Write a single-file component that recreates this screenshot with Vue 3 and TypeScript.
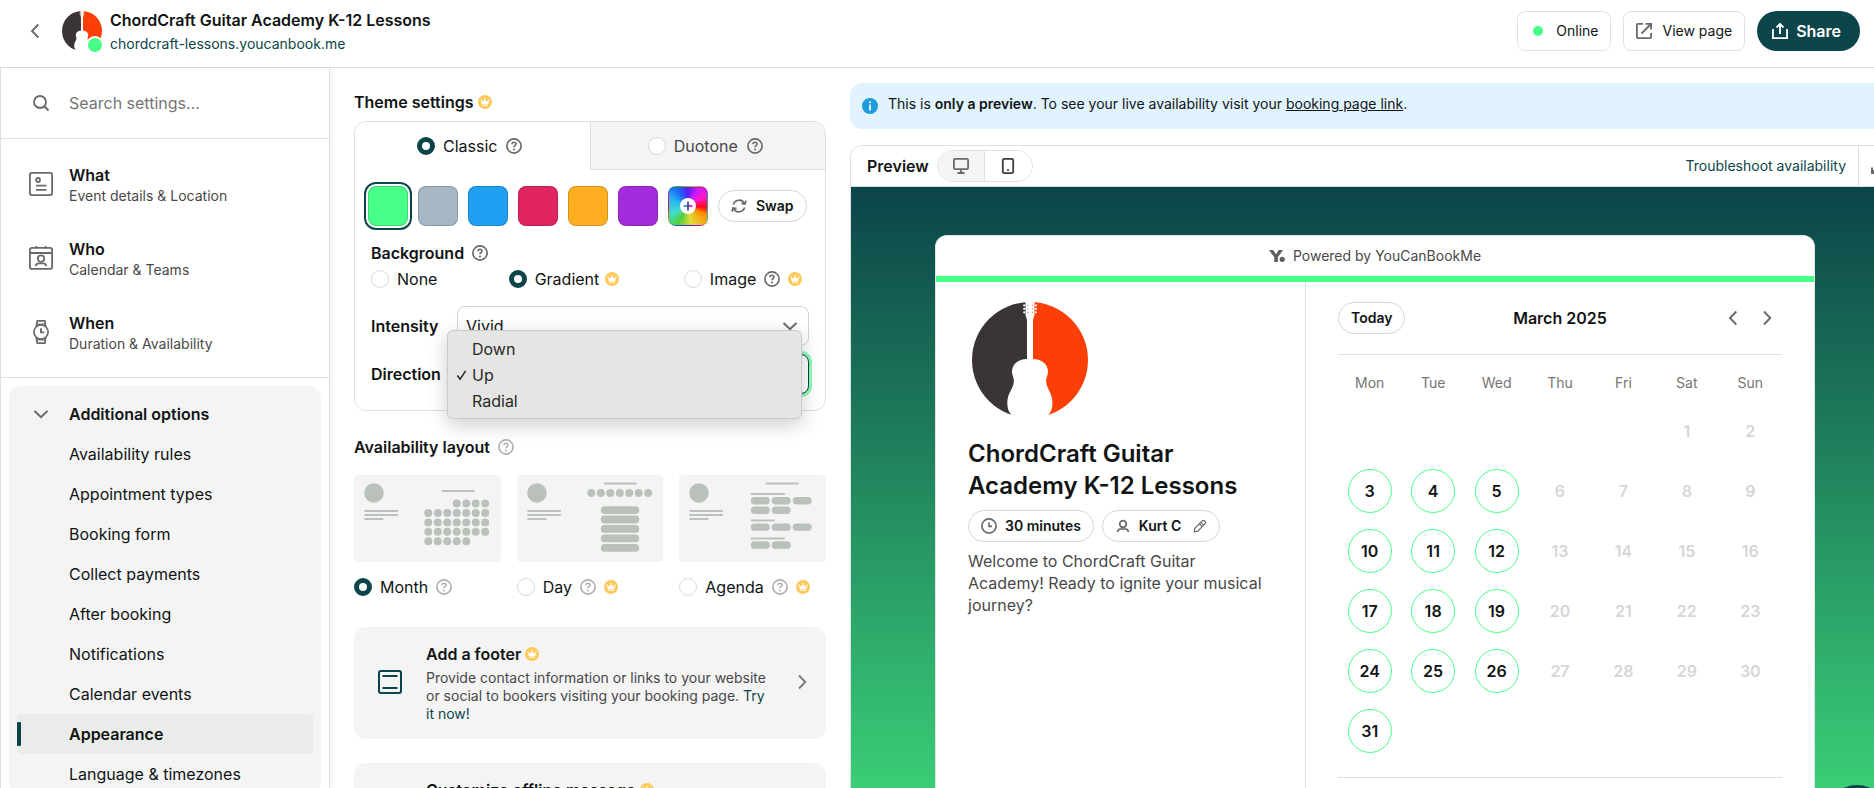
<script setup lang="ts">
import { ref } from 'vue'

interface Section { icon: string; title: string; detail: string }
interface Layout { id: string; label: string; premium: boolean }
interface Day { label: number | null; open: boolean }

const sections: Section[] = [
  { icon: 'what', title: 'What', detail: 'Event details & Location' },
  { icon: 'who', title: 'Who', detail: 'Calendar & Teams' },
  { icon: 'when', title: 'When', detail: 'Duration & Availability' },
]

const options: string[] = [
  'Availability rules', 'Appointment types', 'Booking form', 'Collect payments', 'After booking',
  'Notifications', 'Calendar events', 'Appearance', 'Language & timezones',
]

const swatches: string[] = ['green', 'grey', 'blue', 'red', 'orange', 'purple']

const layouts: Layout[] = [
  { id: 'month', label: 'Month', premium: false },
  { id: 'day', label: 'Day', premium: true },
  { id: 'agenda', label: 'Agenda', premium: true },
]

const directions: string[] = ['Down', 'Up', 'Radial']
const weekdays: string[] = ['Mon', 'Tue', 'Wed', 'Thu', 'Fri', 'Sat', 'Sun']

const theme = ref('classic')
const colour = ref('green')
const background = ref('gradient')
const intensity = ref('Vivid')
const direction = ref('Up')
const layout = ref('month')
const menuOpen = ref(true)
const search = ref('')

// 1 March 2025 is a Saturday, so five cells stay blank before it.
const leading = 5
const weeks: Day[][] = Array.from({ length: 6 }, (_, w) =>
  Array.from({ length: 7 }, (_, d) => {
    const n = w * 7 + d - leading + 1
    const inMonth = n >= 1 && n <= 31
    return { label: inMonth ? n : null, open: inMonth && d < 3 }
  }),
)

const dotX = (i: number): number => 74.5 + i * 9.5
const monthDots = [
  ...[3, 4, 5, 6].map((i) => ({ x: dotX(i), y: 28.5 })),
  ...[38, 47.5, 57].flatMap((y) => [0, 1, 2, 3, 4, 5, 6].map((i) => ({ x: dotX(i), y }))),
  ...[0, 1, 2, 3, 4].map((i) => ({ x: dotX(i), y: 66.5 })),
]
const agendaPills = [
  [72, 22], [93, 22], [114, 22], [72, 31.5], [93, 31.5],
  [72, 48.5], [93, 48.5], [114, 48.5], [72, 66.5], [93, 66.5],
]

function pick(value: string): void {
  direction.value = value
  menuOpen.value = false
}
</script>

<template>
  <div class="app">
    <svg class="defs" aria-hidden="true">
      <symbol id="i-help" viewBox="0 0 16 16">
        <circle cx="8" cy="8" r="7.1" fill="none" stroke="currentColor" stroke-width="1.7" />
        <path d="M6 6.3C6 5 6.9 4.3 8 4.3s2 .7 2 1.8c0 1.4-2 1.5-2 3.1" fill="none" stroke="currentColor" stroke-width="1.6" />
        <circle cx="8" cy="11.4" r="1" fill="currentColor" />
      </symbol>
      <symbol id="i-crown" viewBox="0 0 14 14">
        <circle cx="7" cy="7" r="7" fill="#ffc857" />
        <path d="M3.7 9 3 5.1l2.1 1.3L7 3.9l1.9 2.5L11 5.1 10.3 9zM4 9.6h6v1.1H4z" fill="#fff" />
        <circle cx="7" cy="3.7" r=".8" fill="#fff" />
        <circle cx="3" cy="5" r=".7" fill="#fff" />
        <circle cx="11" cy="5" r=".7" fill="#fff" />
      </symbol>
      <symbol id="i-left" viewBox="0 0 16 16"><path d="M11.3 1.5 5 8l6.3 6.5" fill="none" stroke="currentColor" stroke-width="1.9" /></symbol>
      <symbol id="i-right" viewBox="0 0 16 16"><path d="M5 1.5 11.3 8 5 14.5" fill="none" stroke="currentColor" stroke-width="1.9" /></symbol>
      <symbol id="i-down" viewBox="0 0 16 16"><path d="M1.5 5 8 11.3 14.5 5" fill="none" stroke="currentColor" stroke-width="1.9" /></symbol>
      <symbol id="i-search" viewBox="0 0 16 16">
        <circle cx="7" cy="7" r="6" fill="none" stroke="currentColor" stroke-width="1.8" />
        <path d="m11.2 11.2 4.3 4.3" stroke="currentColor" stroke-width="2" />
      </symbol>
      <symbol id="i-what" viewBox="0 0 24 24">
        <g fill="none" stroke="currentColor" stroke-width="1.8">
          <rect x=".9" y=".9" width="22.2" height="22.2" rx="2" />
          <circle cx="9" cy="8" r="2" />
          <path d="M7 13.6h10.500M7 17.900h10.500" />
        </g>
      </symbol>
      <symbol id="i-who" viewBox="0 0 24 24">
        <g fill="none" stroke="currentColor" stroke-width="1.8">
          <rect x=".9" y="1.900" width="22.2" height="21" rx="2" />
          <path d="M1 7h22M7.500 0v2M16.500 0v2" />
          <circle cx="12" cy="12.600" r="3.200" />
          <path d="M6.800 20.200c.2-2 1.200-2.900 2.900-2.900h4.600c1.700 0 2.700.9 2.900 2.900" />
        </g>
      </symbol>
      <symbol id="i-when" viewBox="0 0 24 24">
        <g fill="none" stroke="currentColor" stroke-width="1.7">
          <circle cx="12" cy="12" r="7.100" />
          <path d="m7.300 6.700.9-5.800h7.600l.9 5.800M7.300 17.300l.9 5.800h7.600l.9-5.800" />
          <path d="M8 4.200h8M8 19.800h8" stroke-width="1.200" />
          <path d="M12 8.200V12.400h3.200" stroke-width="1.900" />
        </g>
      </symbol>
      <symbol id="i-external" viewBox="0 0 16 16">
        <g fill="none" stroke="currentColor" stroke-width="1.800">
          <path d="M7 .9H1.900a1 1 0 0 0-1 1v12.200a1 1 0 0 0 1 1h12.200a1 1 0 0 0 1-1V10" />
          <path d="M9.500.9h5.600v5.600M15 1 5.500 10.500" />
        </g>
      </symbol>
      <symbol id="i-share" viewBox="0 0 16 16">
        <path d="M.9 6v9.100h14.200V6M8 11V1.500M4.500 4.500 8 1l3.500 3.500" fill="none" stroke="currentColor" stroke-width="1.900" />
      </symbol>
      <symbol id="i-swap" viewBox="0 0 16 16">
        <g fill="none" stroke="currentColor" stroke-width="1.700">
          <path d="M2.400 6.500a6 6 0 0 1 10.900-1.400M13.600 9.500A6 6 0 0 1 2.700 10.900" />
          <path d="M15 2.500l-1 3.500-3.600-.6M1 13.500l1-3.500 3.600.6" />
        </g>
      </symbol>
      <symbol id="i-footer" viewBox="0 0 24 24">
        <rect x="1" y="1" width="22" height="22" rx="2" fill="none" stroke="currentColor" stroke-width="2" />
        <path d="M4.500 6h15M4.500 18h15" stroke="currentColor" stroke-width="2" />
      </symbol>
      <symbol id="i-info" viewBox="0 0 16 16">
        <circle cx="8" cy="8" r="8" fill="#1e9cdb" />
        <path d="M8 6.500v6" stroke="#fff" stroke-width="1.700" />
        <circle cx="8" cy="4.200" r="1" fill="#fff" />
      </symbol>
      <symbol id="i-desktop" viewBox="0 0 16 16">
        <rect x=".9" y=".9" width="14.200" height="10.200" rx="1.200" fill="none" stroke="currentColor" stroke-width="1.800" />
        <path d="M8 11v4M4.500 15h7" stroke="currentColor" stroke-width="1.800" />
      </symbol>
      <symbol id="i-phone" viewBox="0 0 16 16">
        <rect x="2.800" y=".9" width="10.400" height="14.200" rx="1.500" fill="none" stroke="currentColor" stroke-width="1.800" />
        <circle cx="8" cy="12" r="1" fill="currentColor" />
      </symbol>
      <symbol id="i-expand" viewBox="0 0 16 16">
        <path d="M9.500 1H15v5.500M15 1 9.500 6.500M1 9.500V15h5.500M1 15l5.500-5.500" fill="none" stroke="currentColor" stroke-width="2" />
      </symbol>
      <symbol id="i-mark" viewBox="0 0 16 12">
        <path d="M0 0h4l3 4.200L9.800 0H14L8.900 7.300V12H5.300V7.300z" fill="currentColor" />
        <circle cx="13.200" cy="9.300" r="2.600" fill="currentColor" />
      </symbol>
      <symbol id="i-clock" viewBox="0 0 16 16">
        <circle cx="8" cy="8" r="7.100" fill="none" stroke="currentColor" stroke-width="1.700" />
        <path d="M8 4.500V8.300h3" fill="none" stroke="currentColor" stroke-width="1.700" />
      </symbol>
      <symbol id="i-person" viewBox="0 0 16 16">
        <circle cx="8" cy="6" r="3.300" fill="none" stroke="currentColor" stroke-width="1.700" />
        <path d="M2.700 14c.1-2.200 1-3 2.700-3h5.200c1.700 0 2.600.8 2.700 3" fill="none" stroke="currentColor" stroke-width="1.700" />
      </symbol>
      <symbol id="i-pencil" viewBox="0 0 14 14">
        <path d="M1.200 12.800 1.800 9.300 9.300 1.800a1.500 1.500 0 0 1 2.100 0l.8.8a1.500 1.500 0 0 1 0 2.100L4.700 12.200zM7.800 3.300l2.900 2.900M6.300 4.800l2.900 2.900" fill="none" stroke="currentColor" stroke-width="1.200" />
      </symbol>
      <symbol id="i-check" viewBox="0 0 12 12"><path d="m1.500 6.500 3 4L10.500 1.500" fill="none" stroke="currentColor" stroke-width="1.700" /></symbol>
      <symbol id="i-guitar" viewBox="0 0 124 124">
        <path d="M62 4A58 58 0 0 0 62 120z" fill="#3b3436" />
        <path d="M62 4A58 58 0 0 1 62 120z" fill="#fb3f06" />
        <path d="M59 61V22L57.500 17V3H66.500V17L65 22V61C74 61 80 66.500 80 74c0 3-2 5-1.800 10 .5 7 6.300 11 6.300 21 0 5-1.200 9-4.200 12v6H43.500v-6c-3-3-4.200-7-4.200-12 0-10 6-14 6.500-21 .2-5-1.800-7-1.800-10 0-7.500 6-13 15-13z" fill="#fff" />
        <g fill="#fff">
          <circle v-for="y in [7.300, 10.800, 14.300]" :key="y" cx="56.200" :cy="y" r="1.100" />
          <circle v-for="y in [7.300, 10.800, 14.300]" :key="y + 50" cx="67.900" :cy="y" r="1.100" />
        </g>
        <g fill="#fb8a68">
          <circle v-for="y in [7.300, 10.800, 14.300]" :key="y" cx="64.400" :cy="y" r=".7" />
        </g>
        <g fill="#8d8889">
          <circle v-for="y in [7.300, 10.800, 14.300]" :key="y" cx="60" :cy="y" r=".6" />
        </g>
      </symbol>
    </svg>

    <header class="topbar">
      <button class="plain back" type="button" aria-label="Back"><svg class="s16"><use href="#i-left" /></svg></button>
      <div class="avatar">
        <svg viewBox="4 4 116 116"><use href="#i-guitar" width="124" height="124" /></svg>
        <span class="presence"></span>
      </div>
      <div class="identity">
        <h1>ChordCraft Guitar Academy K-12 Lessons</h1>
        <a href="#">chordcraft-lessons.youcanbook.me</a>
      </div>
      <button class="boxed online" type="button"><span class="status"></span>Online</button>
      <button class="boxed" type="button"><svg class="s16 grey"><use href="#i-external" /></svg>View page</button>
      <button class="share" type="button"><svg class="s16"><use href="#i-share" /></svg>Share</button>
    </header>

    <div class="body">
      <nav class="sidebar" aria-label="Settings">
        <label class="search">
          <svg class="s16"><use href="#i-search" /></svg>
          <input v-model="search" type="text" placeholder="Search settings..." aria-label="Search settings" />
        </label>
        <div class="sections">
          <a v-for="s in sections" :key="s.title" class="section" href="#">
            <svg class="s24"><use :href="`#i-${s.icon}`" /></svg>
            <span><b>{{ s.title }}</b><small>{{ s.detail }}</small></span>
          </a>
        </div>
        <div class="extra">
          <button class="plain toggle" type="button"><svg class="s16"><use href="#i-down" /></svg>Additional options</button>
          <a v-for="o in options" :key="o" href="#" :class="['option', { active: o === 'Appearance' }]">{{ o }}</a>
        </div>
      </nav>

      <section class="settings">
        <h2>Theme settings <svg class="crown"><use href="#i-crown" /></svg></h2>
        <div class="panel">
          <div class="tabs">
            <div :class="['tab', { off: theme !== 'classic' }]">
              <label><input v-model="theme" type="radio" name="theme" value="classic" />Classic</label>
              <button class="plain help" type="button" aria-label="About Classic"><svg class="s16"><use href="#i-help" /></svg></button>
            </div>
            <div :class="['tab', { off: theme !== 'duotone' }]">
              <label><input v-model="theme" type="radio" name="theme" value="duotone" />Duotone</label>
              <button class="plain help" type="button" aria-label="About Duotone"><svg class="s16"><use href="#i-help" /></svg></button>
            </div>
          </div>

          <div class="swatches">
            <button v-for="c in swatches" :key="c" type="button" :aria-label="c" :class="['swatch', c, { chosen: colour === c }]" @click="colour = c"></button>
            <button type="button" class="swatch wheel" aria-label="Custom colour">
              <svg viewBox="0 0 16 16"><circle cx="8" cy="8" r="8" fill="#fff" /><path d="M3.500 8H8" stroke="#1294c4" stroke-width="1.600" /><path d="M8 8h4.500" stroke="#c400c8" stroke-width="1.600" /><path d="M8 3.500v9" stroke="#3a2f9a" stroke-width="1.600" /></svg>
            </button>
            <button type="button" class="pill swap"><svg class="s16 grey"><use href="#i-swap" /></svg>Swap</button>
          </div>

          <div class="fields">
            <h3>Background <button class="plain help" type="button" aria-label="About background"><svg class="s16"><use href="#i-help" /></svg></button></h3>
            <div class="choices">
              <span><label><input v-model="background" type="radio" name="bg" value="none" />None</label></span>
              <span><label><input v-model="background" type="radio" name="bg" value="gradient" />Gradient</label><svg class="crown"><use href="#i-crown" /></svg></span>
              <span>
                <label><input v-model="background" type="radio" name="bg" value="image" />Image</label>
                <button class="plain help" type="button" aria-label="About image"><svg class="s16"><use href="#i-help" /></svg></button>
                <svg class="crown"><use href="#i-crown" /></svg>
              </span>
            </div>
            <div class="field">
              <label for="intensity">Intensity</label>
              <div class="select">
                <select id="intensity" v-model="intensity"><option>Vivid</option><option>Subtle</option></select>
                <svg class="s16"><use href="#i-down" /></svg>
              </div>
            </div>
            <div class="field">
              <label for="direction">Direction</label>
              <div class="select focused">
                <select id="direction" v-model="direction"><option v-for="d in directions" :key="d">{{ d }}</option></select>
                <ul v-if="menuOpen" class="menu" role="listbox" aria-label="Direction">
                  <li v-for="d in directions" :key="d" role="option" :aria-selected="direction === d" @click="pick(d)">
                    <svg><use v-if="direction === d" href="#i-check" /></svg>{{ d }}
                  </li>
                </ul>
              </div>
            </div>
          </div>
        </div>

        <h2 class="spaced">Availability layout <button class="plain help faint" type="button" aria-label="About layouts"><svg class="s16"><use href="#i-help" /></svg></button></h2>
        <div class="layouts">
          <div v-for="l in layouts" :key="l.id" class="layout">
            <svg class="thumb" viewBox="0 0 147 87" aria-hidden="true">
              <g fill="#bac1ba">
                <circle cx="20" cy="18" r="9.800" />
                <path d="M10.500 35h33.500v2H10.500zM10.500 39h33.500v2H10.500zM10.500 43h19v2h-19z" />
                <template v-if="l.id === 'month'">
                  <path d="M88 15h33v2H88z" />
                  <circle v-for="(p, i) in monthDots" :key="i" :cx="p.x" :cy="p.y" r="4" />
                </template>
                <template v-else-if="l.id === 'day'">
                  <path d="M87 7.500h33v2H87z" />
                  <circle v-for="i in 7" :key="i" :cx="dotX(i - 1)" cy="18" r="4" />
                  <rect v-for="i in 5" :key="i + 10" x="84" :y="21.700 + i * 9.500" width="38.500" height="7.800" rx="3.900" />
                </template>
                <template v-else>
                  <path d="M87 7.500h33v2H87zM72 18h34v2H72zM72 44.500h24v2H72zM72 62.600h34v2H72z" />
                  <rect v-for="(p, i) in agendaPills" :key="i" :x="p[0]" :y="p[1]" width="19" height="7.500" rx="3.700" />
                </template>
              </g>
            </svg>
            <span>
              <label><input v-model="layout" type="radio" name="layout" :value="l.id" />{{ l.label }}</label>
              <button class="plain help faint" type="button" :aria-label="`About ${l.label}`"><svg class="s16"><use href="#i-help" /></svg></button>
              <svg v-if="l.premium" class="crown"><use href="#i-crown" /></svg>
            </span>
          </div>
        </div>

        <article class="promo">
          <svg class="s24"><use href="#i-footer" /></svg>
          <div>
            <h3>Add a footer <svg class="crown"><use href="#i-crown" /></svg></h3>
            <p>Provide contact information or links to your website or social to bookers visiting your booking page. <a href="#">Try it now!</a></p>
          </div>
          <svg class="s16"><use href="#i-right" /></svg>
        </article>
        <article class="promo">
          <svg class="s24"><use href="#i-footer" /></svg>
          <div>
            <h3>Customize offline message <svg class="crown"><use href="#i-crown" /></svg></h3>
            <p>Choose the message shown to bookers while your booking page is offline. <a href="#">Try it now!</a></p>
          </div>
          <svg class="s16"><use href="#i-right" /></svg>
        </article>
      </section>

      <section class="preview">
        <div class="notice">
          <svg class="s16"><use href="#i-info" /></svg>
          <p>This is <b>only a preview</b>. To see your live availability visit your <a href="#">booking page link</a>.</p>
        </div>
        <div class="frame">
          <div class="framebar">
            <h2>Preview</h2>
            <div class="devices">
              <button class="current" type="button" aria-label="Desktop"><svg class="s16"><use href="#i-desktop" /></svg></button>
              <button type="button" aria-label="Mobile"><svg class="s16"><use href="#i-phone" /></svg></button>
            </div>
            <a class="trouble" href="#">Troubleshoot availability</a>
            <button class="plain expand" type="button" aria-label="Expand"><svg class="s16"><use href="#i-expand" /></svg></button>
          </div>
          <div class="canvas">
            <div class="card">
              <div class="powered"><svg><use href="#i-mark" /></svg>Powered by YouCanBookMe</div>
              <div class="columns">
                <div class="about">
                  <svg class="logo"><use href="#i-guitar" /></svg>
                  <h2>ChordCraft Guitar Academy K-12 Lessons</h2>
                  <div class="facts">
                    <span class="pill"><svg class="s16"><use href="#i-clock" /></svg>30 minutes</span>
                    <button class="pill" type="button"><svg class="s16"><use href="#i-person" /></svg>Kurt C<svg class="pencil"><use href="#i-pencil" /></svg></button>
                  </div>
                  <p>Welcome to ChordCraft Guitar Academy! Ready to ignite your musical journey?</p>
                </div>
                <div class="calendar">
                  <div class="calbar">
                    <button class="pill" type="button">Today</button>
                    <h3>March 2025</h3>
                    <div>
                      <button class="plain" type="button" aria-label="Previous month"><svg class="s16"><use href="#i-left" /></svg></button>
                      <button class="plain" type="button" aria-label="Next month"><svg class="s16"><use href="#i-right" /></svg></button>
                    </div>
                  </div>
                  <table>
                    <thead><tr><th v-for="d in weekdays" :key="d" scope="col">{{ d }}</th></tr></thead>
                    <tbody>
                      <tr v-for="(week, w) in weeks" :key="w">
                        <td v-for="(day, d) in week" :key="d">
                          <button v-if="day.open" class="day" type="button">{{ day.label }}</button>
                          <template v-else>{{ day.label }}</template>
                        </td>
                      </tr>
                    </tbody>
                  </table>
                </div>
              </div>
            </div>
          </div>
        </div>
      </section>
    </div>
    <button class="chat" type="button" aria-label="Open chat"></button>
  </div>
</template>

<style>
body { margin: 0; }
</style>

<style scoped>
.app {
  --ink: #111414;
  --soft: #484848;
  --icon: #696969;
  --teal: #0c4549;
  --line: #dfe1e1;
  --green: #48ff88;
  position: relative;
  display: flex;
  flex-direction: column;
  height: 100vh;
  overflow: hidden;
  background: #fff;
  color: var(--ink);
  font: 400 16px/24px Inter, "Liberation Sans", sans-serif;
}
.app * { box-sizing: border-box; }
h1, h2, h3, p, ul { margin: 0; padding: 0; }
h1, h2, h3 { font-size: 16px; line-height: 24px; font-weight: 600; }
b { font-weight: 600; }
a { color: inherit; text-decoration: none; }
button, input, select { font: inherit; color: inherit; margin: 0; }
button { cursor: pointer; }
svg { display: block; flex: none; }
.defs { position: absolute; width: 0; height: 0; }
.s16 { width: 16px; height: 16px; }
.s24 { width: 24px; height: 24px; }
.grey { color: var(--icon); }
.crown { width: 14px; height: 14px; }
.plain { display: flex; align-items: center; justify-content: center; border: 0; background: none; padding: 0; color: var(--icon); }
.faint { color: #b2b2b2; }
.pill {
  display: inline-flex; align-items: center; height: 32px; padding: 0 12px;
  border: 1px solid #d6d8d8; border-radius: 16px; background: #fff;
  font-size: 14px; line-height: 20px; font-weight: 600; white-space: nowrap;
}
.pill svg { color: var(--icon); }

.topbar { flex: none; display: flex; align-items: center; height: 68px; padding: 0 14px 5px 27px; border-bottom: 1px solid var(--line); }
.back { width: 16px; height: 24px; }
.avatar { position: relative; width: 40px; height: 40px; margin: 0 8px 0 19px; }
.avatar > svg { width: 40px; height: 40px; }
.presence { position: absolute; right: -2px; bottom: -3px; width: 18px; height: 18px; border: 2px solid #fff; border-radius: 50%; background: var(--green); }
.identity { flex: 1; min-width: 0; }
.identity a { display: block; margin-top: 2px; font-size: 14px; line-height: 20px; color: var(--teal); }
.boxed { display: flex; align-items: center; gap: 10px; height: 40px; padding: 0 12px; margin-right: 12px; border: 1px solid var(--line); border-radius: 8px; background: #fff; font-size: 14px; }
.online { gap: 13px; padding-left: 15px; }
.status { width: 10px; height: 10px; border-radius: 50%; background: var(--green); }
.share { display: flex; align-items: center; gap: 8px; height: 40px; padding: 0 19px 0 15px; border: 0; border-radius: 20px; background: var(--teal); color: #fff; font-weight: 600; }

.body { flex: 1; min-height: 0; display: flex; }
.sidebar { flex: none; width: 330px; border: solid var(--line); border-width: 0 1px; box-shadow: 2px 0 4px rgba(0, 0, 0, .05); }
.search { display: flex; align-items: center; gap: 20px; height: 71px; padding: 0 24px 0 32px; border-bottom: 1px solid var(--line); color: var(--icon); }
.search input { flex: 1; min-width: 0; border: 0; padding: 0; outline: 0; background: none; }
.search input::placeholder { color: #757575; opacity: 1; }
.sections { padding: 8px 0; border-bottom: 1px solid var(--line); }
.section { display: flex; align-items: center; gap: 16px; height: 74px; padding: 0 28px; color: var(--icon); }
.section span { padding-top: 2px; }
.section b { display: block; line-height: 22px; color: var(--ink); }
.section small { display: block; font-size: 14px; line-height: 20px; color: var(--soft); }
.extra { margin: 8px; padding: 8px 8px 0; border-radius: 12px; background: #f4f4f4; }
.toggle { width: 100%; height: 40px; gap: 20px; padding-left: 16px; justify-content: flex-start; font-weight: 600; color: var(--ink); }
.toggle svg { color: var(--icon); }
.option { display: flex; align-items: center; height: 40px; padding-left: 52px; border-radius: 4px; }
.option.active { padding-left: 0; background: #eaece9; font-weight: 600; }
.option.active::before { content: ""; width: 4px; height: 24px; margin-right: 48px; border-radius: 1px; background: var(--teal); }

.settings { flex: none; width: 520px; padding: 22px 24px 0; }
.settings h2, .settings h3 { display: flex; align-items: center; gap: 4px; }
.settings .fields h3, .settings h2.spaced { gap: 8px; }
.settings h2.spaced { margin: 24px 0 16px; }
.panel { margin-top: 7px; border: 1px solid var(--line); border-radius: 12px; }
.tabs { display: flex; }
.tab { flex: 1; display: flex; align-items: center; justify-content: center; gap: 9px; height: 48px; padding-right: 5px; border-bottom: 1px solid transparent; }
.tab.off { border-bottom-color: var(--line); border-left: 1px solid var(--line); border-top-right-radius: 11px; background: #f4f4f4; color: var(--soft); }
label { display: flex; align-items: center; }
input[type="radio"] { appearance: none; flex: none; width: 18px; height: 18px; margin-right: 8px; border: 1px solid #d9dbdb; border-radius: 50%; background: #fff; }
input[type="radio"]:checked { border: 5px solid var(--teal); }
.swatches { display: flex; align-items: center; gap: 10px; padding: 16px 13px 0; }
.swatch { width: 40px; height: 40px; padding: 0; border: 1px solid rgba(0, 0, 0, .16); border-radius: 8px; }
.chosen { box-shadow: 0 0 0 2px #fff, 0 0 0 4px var(--teal); }
.green { background: #48ff88; }
.grey.swatch { background: #a5b6c5; }
.blue { background: #219ff3; }
.red { background: #e0245e; }
.orange { background: #fdae21; }
.purple { background: #a42bdc; }
.wheel { display: flex; align-items: center; justify-content: center; background: conic-gradient(from 0deg, #5a1bf5, #c71cfb 30deg, #ff17c8 60deg, #ff0a14 95deg, #ff8a00 115deg, #f0b41c 140deg, #e2dc36 170deg, #52cf3c 210deg, #40dcd0 245deg, #28b8ef 290deg, #1a6df5 325deg, #5a1bf5); }
.wheel svg { width: 16px; height: 16px; }
.swap { gap: 9px; }
.fields { padding: 15px 16px 16px; }
.choices { display: grid; grid-template-columns: 11fr 14fr 10fr; margin: 2px 0 15px; }
.choices span, .layout span { display: flex; align-items: center; }
.choices .crown { margin-left: 6px; }
.choices .help { margin-left: 8px; }
.choices .help + .crown { margin-left: 8px; }
.field { display: flex; align-items: center; margin-top: 8px; }
.field label { width: 86px; font-weight: 600; }
.select { position: relative; flex: 1; }
.select select { display: block; width: 100%; height: 40px; padding: 0 8px; border: 1px solid #d2d4d4; border-radius: 8px; background: #fff; appearance: none; outline: 0; }
.select > svg { position: absolute; right: 11px; top: 12px; color: var(--icon); pointer-events: none; }
.focused select { border-color: var(--teal); box-shadow: 0 0 0 3px #8ef7b6; }
.menu { position: absolute; z-index: 3; left: -10px; right: 7px; top: -24px; padding: 5px 0 4px; list-style: none; border: 1px solid #cacac8; border-radius: 6px; background: #e5e5e3; box-shadow: 0 6px 20px rgba(0, 0, 0, .2); color: #2a2a2a; }
.menu li { display: flex; align-items: center; gap: 5px; height: 26px; padding-left: 8px; cursor: default; }
.menu svg { width: 11px; height: 12px; }
.layouts { display: grid; grid-template-columns: repeat(3, 1fr); gap: 16px; }
.thumb { width: 100%; height: auto; margin-bottom: 13px; border-radius: 4px; background: #f4f4f4; }
.layout .help { margin-left: 8px; }
.layout .crown { margin-left: 8px; }
.promo { display: flex; align-items: center; gap: 24px; margin-top: 28px; padding: 15px 16px 16px 24px; border-radius: 12px; background: #f4f4f4; }
.promo + .promo { margin-top: 24px; }
.promo > div { flex: 1; }
.promo > svg:first-child { color: var(--teal); }
.promo > svg:last-child { color: #7a7a7a; }
.promo p { margin-top: 3px; font-size: 14px; line-height: 18px; color: var(--soft); }
.promo a { color: var(--teal); }

.preview { flex: 1; min-width: 0; display: flex; flex-direction: column; margin-right: -26px; padding-top: 15px; }
.notice { flex: none; display: flex; align-items: center; gap: 10px; height: 46px; padding: 0 12px; border-radius: 12px; background: #e0f3ff; font-size: 14px; }
.notice p { padding-bottom: 4px; }
.notice a { text-decoration: underline; }
.frame { flex: 1; min-height: 0; display: flex; flex-direction: column; margin-top: 16px; border: 1px solid var(--line); border-bottom: 0; border-radius: 12px 12px 0 0; overflow: hidden; }
.framebar { flex: none; display: flex; align-items: center; height: 41px; padding-left: 16px; border-bottom: 1px solid var(--line); }
.devices { display: flex; margin-left: 8px; border: 1px solid var(--line); border-radius: 16px; overflow: hidden; }
.devices button { display: flex; align-items: center; justify-content: center; width: 47px; height: 30px; padding: 0; border: 0; background: #fff; color: #3c3c3c; }
.devices .current { border-right: 1px solid var(--line); background: #f4f4f4; color: #6a6a6a; }
.trouble { margin-left: auto; font-size: 14px; color: var(--teal); }
.expand { width: 41px; height: 40px; margin-left: 12px; border-left: 1px solid var(--line); }
.canvas { flex: 1; min-height: 0; display: flex; padding: 48px 84px 0; background: linear-gradient(#0b4449, #3acd76); }
.card { flex: 1; display: flex; flex-direction: column; border: 1px solid #dfe5e1; border-bottom: 0; border-radius: 12px 12px 0 0; background: #fff; }
.powered { flex: none; display: flex; align-items: center; justify-content: center; gap: 8px; height: 46px; border-bottom: 6px solid var(--green); font-size: 14px; color: var(--soft); }
.powered svg { width: 16px; height: 12px; color: #5f5f5f; }
.columns { flex: 1; display: flex; }
.about { flex: 1; padding: 16px 32px 0; border-right: 1px solid var(--line); }
.logo { width: 124px; height: 124px; }
.about h2 { margin-top: 16px; font-size: 24px; line-height: 32px; }
.facts { display: flex; gap: 8px; margin: 8px 0; }
.facts .pill { gap: 8px; }
.pencil { width: 14px; height: 14px; margin-left: 4px; }
.about p { line-height: 22px; color: var(--soft); }
.calendar { flex: none; width: 508px; padding: 20px 32px 0; }
.calbar { display: grid; grid-template-columns: 1fr auto 1fr; align-items: center; padding-bottom: 20px; border-bottom: 1px solid var(--line); }
.calbar .pill { justify-self: start; }
.calbar > div { display: flex; justify-content: flex-end; gap: 4px; }
.calbar .plain { width: 30px; height: 32px; }
table { width: 100%; margin-top: 10px; padding-bottom: 16px; border-spacing: 0; table-layout: fixed; border-bottom: 1px solid var(--line); }
th { height: 36px; padding: 0; font-size: 14px; font-weight: 400; color: #757575; }
td { height: 60px; padding: 0; text-align: center; font-weight: 600; color: #d6d6d6; }
.day { display: block; width: 44px; height: 44px; margin: 0 auto; padding: 0; border: 1px solid var(--green); border-radius: 50%; background: #fff; font-weight: 600; color: var(--ink); }
.chat { position: absolute; z-index: 5; right: -15px; bottom: -61px; width: 64px; height: 64px; padding: 0; border: 0; border-radius: 50%; background: var(--teal); }
</style>
